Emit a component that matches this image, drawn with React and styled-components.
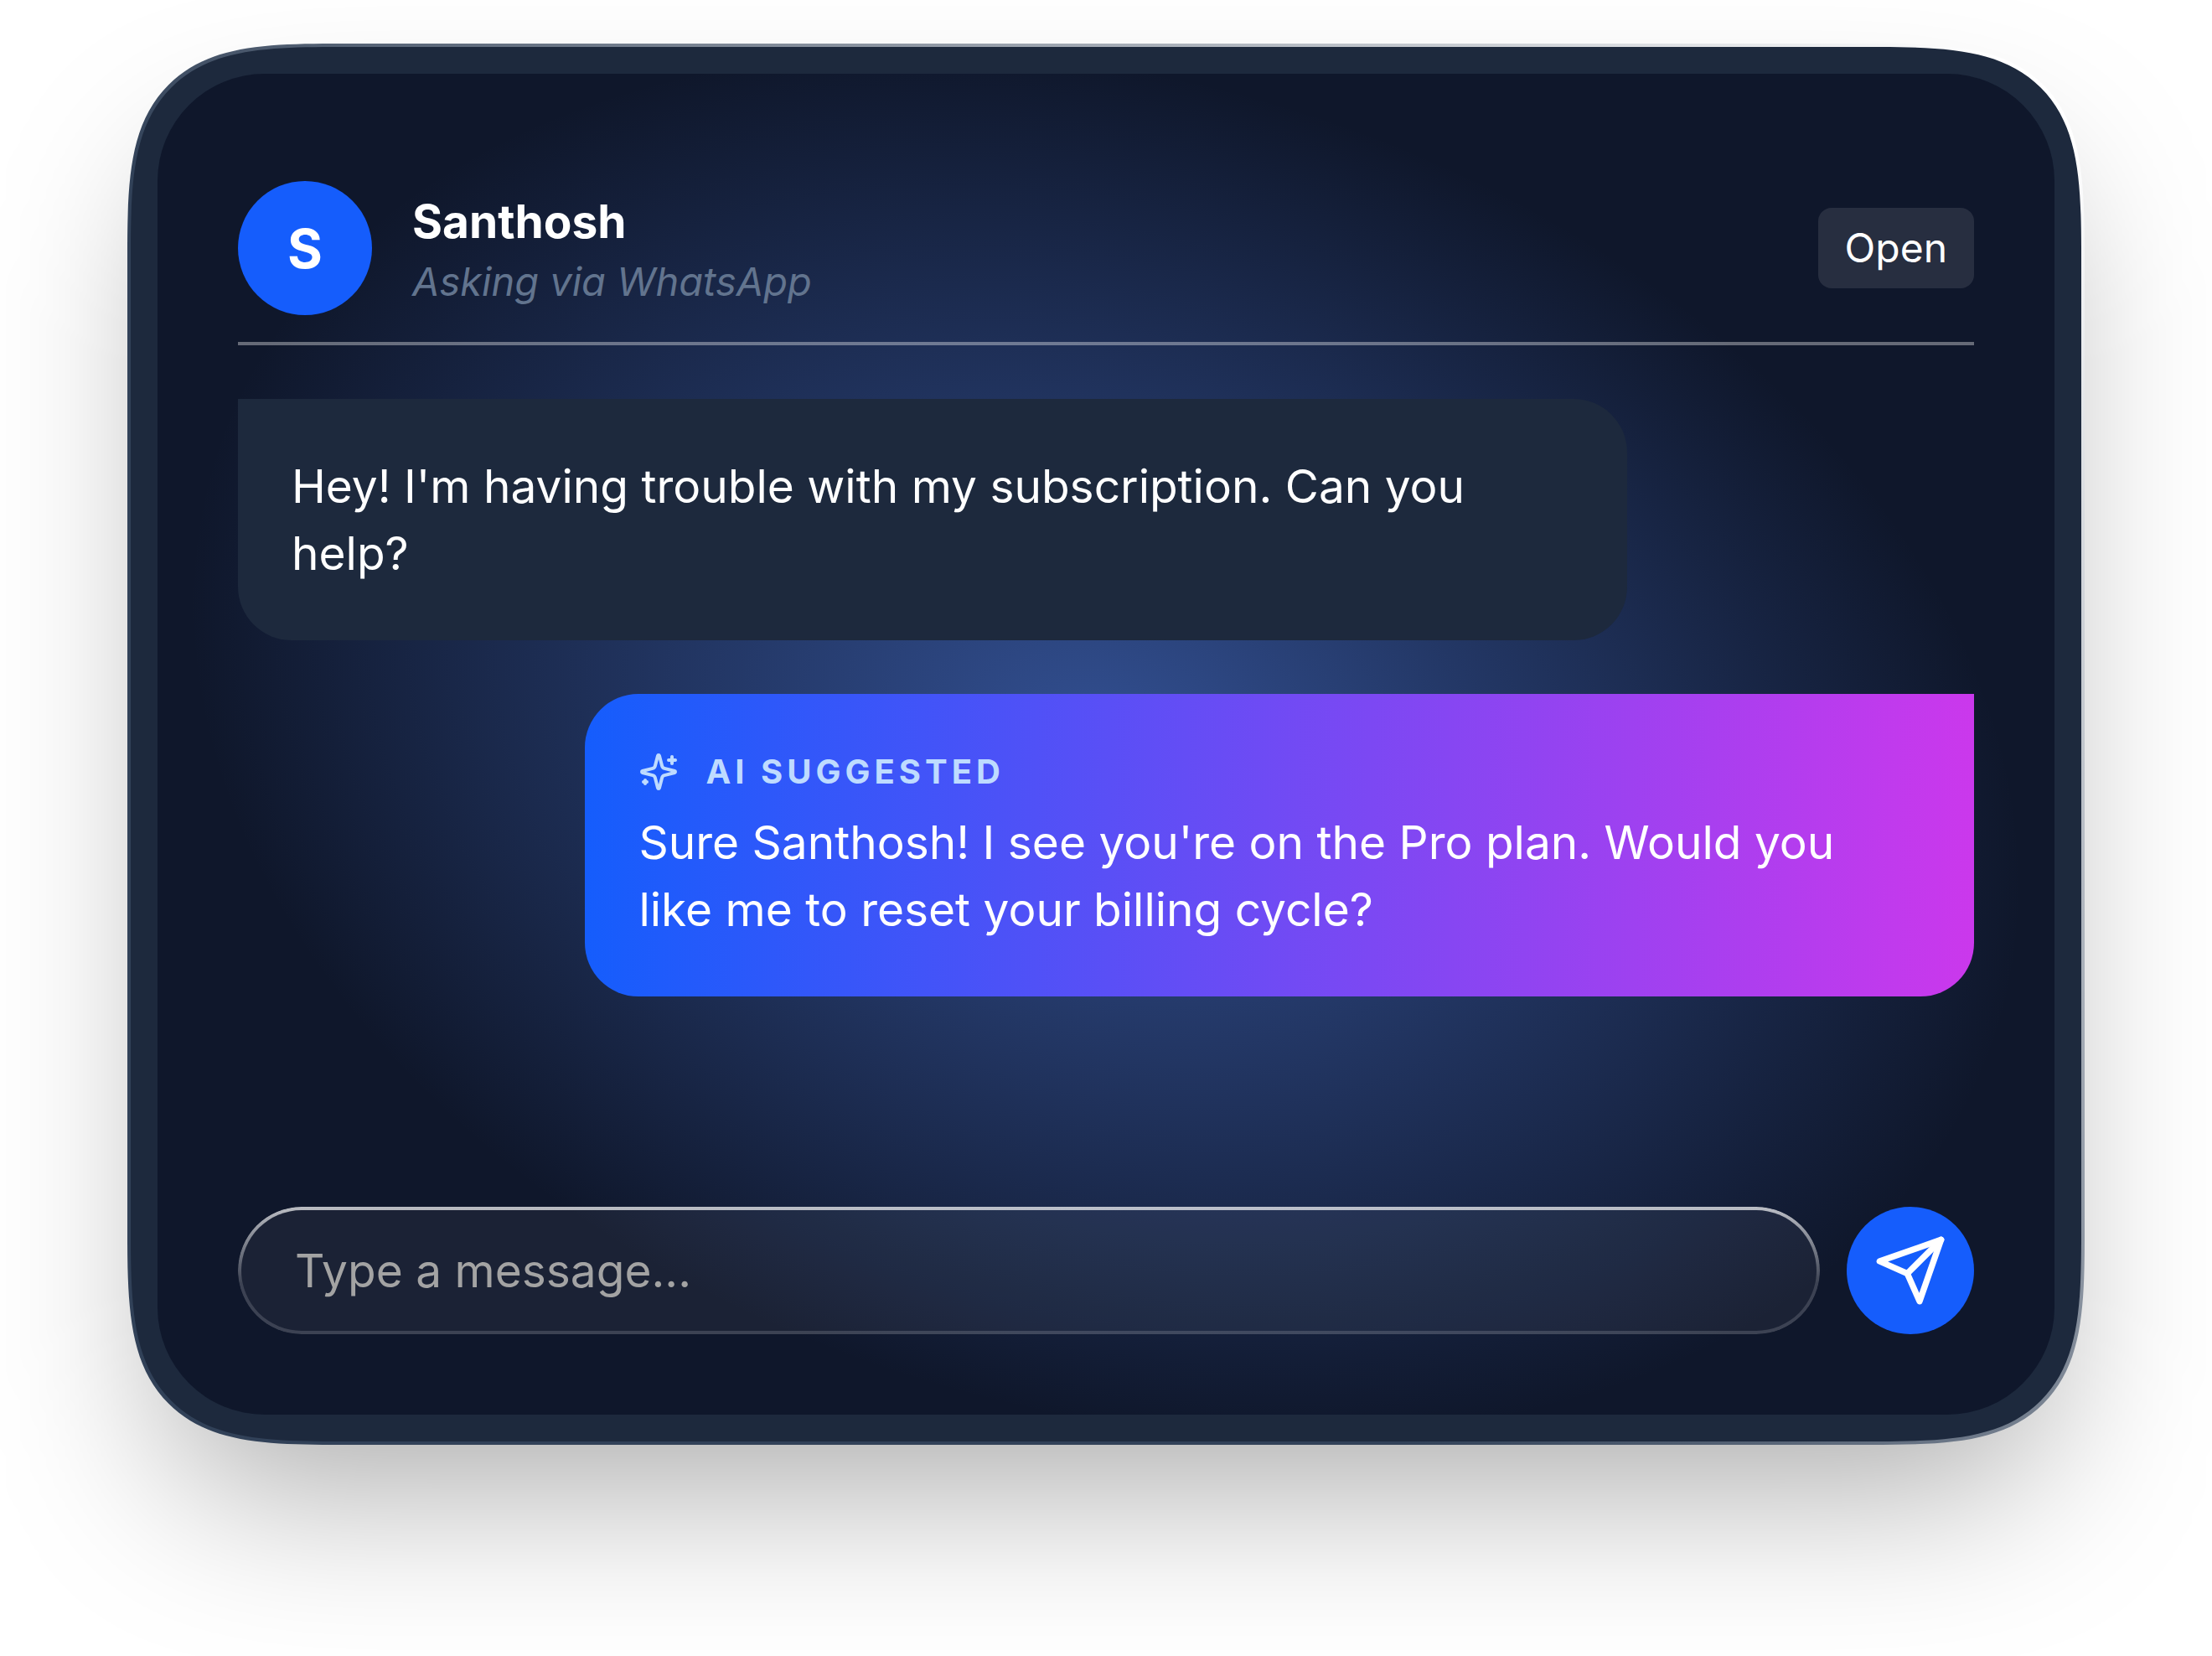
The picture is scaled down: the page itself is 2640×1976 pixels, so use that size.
import React, { useState } from 'react';
import styled, { createGlobalStyle } from 'styled-components';

const messages = [
  { id: 1, from: 'customer', text: "Hey! I'm having trouble with my subscription. Can you help?" },
  { id: 2, from: 'agent', suggested: true, text: "Sure Santhosh! I see you're on the Pro plan. Would you like me to reset your billing cycle?" },
]

function SparklesIcon() {
  return (
    <SmallIcon viewBox="0 0 24 24" aria-hidden="true">
      <path d="M9.937 15.5A2 2 0 0 0 8.5 14.063l-6.135-1.582a.5.5 0 0 1 0-.962L8.5 9.936A2 2 0 0 0 9.937 8.5l1.582-6.135a.5.5 0 0 1 .963 0L14.063 8.5A2 2 0 0 0 15.5 9.937l6.135 1.581a.5.5 0 0 1 0 .964L15.5 14.063a2 2 0 0 0-1.437 1.437l-1.582 6.135a.5.5 0 0 1-.963 0z" />
      <path d="M20 3v4" />
      <path d="M22 5h-4" />
      <path d="M4 17v2" />
      <path d="M5 18H3" />
    </SmallIcon>
  )
}

function SendIcon() {
  return (
    <LargeIcon viewBox="0 0 24 24" aria-hidden="true">
      <path d="m22 2-7 20-4-9-9-4Z" />
      <path d="M22 2 11 13" />
    </LargeIcon>
  )
}

function Message({ message }) {
  return (
    <Bubble $from={message.from}>
      {message.suggested && (
        <SuggestedLabel>
          <SparklesIcon />
          AI SUGGESTED
        </SuggestedLabel>
      )}
      <BubbleText>{message.text}</BubbleText>
    </Bubble>
  )
}

export default function App() {
  const [draft, setDraft] = useState('');

  return (
    <Page>
      <GlobalStyle />
      <Shadow>
        <Frame>
          <Panel>
            <Header>
              <Avatar>S</Avatar>
              <Contact>
                <ContactName>Santhosh</ContactName>
                <ContactSource>Asking via WhatsApp</ContactSource>
              </Contact>
              <OpenButton type="button">Open</OpenButton>
            </Header>
            <Messages>
              {messages.map((message) => <Message key={message.id} message={message} />)}
            </Messages>
            <Composer onSubmit={(e) => e.preventDefault()}>
              <Field>
                <FieldInput
                  type="text"
                  aria-label="Message"
                  placeholder="Type a message..."
                  value={draft}
                  onChange={(e) => setDraft(e.target.value)}
                />
              </Field>
              <SendButton type="submit" aria-label="Send">
                <SendIcon />
              </SendButton>
            </Composer>
          </Panel>
        </Frame>
      </Shadow>
    </Page>
  );
}

const GlobalStyle = createGlobalStyle`
  * {
    box-sizing: border-box;
  }
  body {
    margin: 0;
    background: #ffffff;
    font-family: Inter, 'Liberation Sans', sans-serif;
  }
  button, input {
    font-family: inherit;
  }
`
const Page = styled.main`
  min-height: 100vh;
  padding: 52px 152px 252px;
  overflow: hidden;
`
const Shadow = styled.div`
  position: relative;
  isolation: isolate;
  &::before {
    content: '';
    position: absolute;
    inset: 148px 48px -52px;
    z-index: -1;
    border-radius: 112px;
    background: rgba(0, 0, 0, 0.33);
    filter: blur(100px);
  }
`
const Frame = styled.section`
  padding: 32px;
  border: 4px solid transparent;
  border-radius: 160px;
  background:
    linear-gradient(#1d293d, #1d293d) padding-box,
    linear-gradient(45deg, #314158 38%, #ffffff 97%) border-box;
  @supports (corner-shape: squircle) {
    border-radius: 256px;
    corner-shape: superellipse(1.7);
  }
`
const Panel = styled.div`
  position: relative;
  z-index: 0;
  display: grid;
  grid-template-rows: auto 1fr auto;
  gap: 64px;
  min-height: calc(100vh - 376px);
  padding: 128px 96px 96px;
  border-radius: 128px;
  background: #0f172b;
  overflow: hidden;
  &::before {
    content: '';
    position: absolute;
    inset: 0;
    z-index: -1;
    background: radial-gradient(ellipse, rgba(85, 135, 247, 0.5), transparent 70%);
    transform: rotate(18deg);
  }
`
const Header = styled.header`
  display: flex;
  align-items: center;
  gap: 48px;
  padding-bottom: 32px;
  border-bottom: 4px solid rgba(255, 255, 255, 0.36);
`
const Avatar = styled.div`
  display: flex;
  align-items: center;
  justify-content: center;
  width: 160px;
  height: 160px;
  border-radius: 50%;
  background: #155dfc;
  color: #ffffff;
  font-size: 64px;
  font-weight: 700;
`
const Contact = styled.div`
  flex: 1;
`
const ContactName = styled.h2`
  margin: 0;
  color: #ffffff;
  font-size: 55px;
  font-weight: 700;
  line-height: 80px;
`
const ContactSource = styled.p`
  margin: 0;
  color: #62748e;
  font-size: 47px;
  font-style: italic;
  line-height: 64px;
`
const OpenButton = styled.button`
  padding: 16px 32px;
  border: 0;
  border-radius: 16px;
  background: rgba(255, 255, 255, 0.1);
  color: #ffffff;
  font-size: 48px;
  line-height: 64px;
  cursor: pointer;
`
const Messages = styled.div`
  display: flex;
  flex-direction: column;
  gap: 64px;
`
const Bubble = styled.article`
  width: 80%;
  padding: 64px;
  border-radius: ${props => props.$from === 'agent' ? '64px 0 64px 64px' : '0 64px 64px 64px'};
  align-self: ${props => props.$from === 'agent' ? 'flex-end' : 'flex-start'};
  background: ${props => props.$from === 'agent' ? 'linear-gradient(to right, #155dfc, #cb38ec)' : '#1d293d'};
  color: #ffffff;
`
const SuggestedLabel = styled.div`
  display: flex;
  align-items: center;
  gap: 32px;
  margin-bottom: 16px;
  color: #bedbff;
  font-size: 40px;
  font-weight: 700;
  letter-spacing: 5px;
  line-height: 57px;
`
const BubbleText = styled.p`
  margin: 0;
  font-size: 55px;
  line-height: 80px;
`
const Composer = styled.form`
  display: flex;
  gap: 32px;
`
const Field = styled.div`
  position: relative;
  flex: 1;
  height: 152px;
  border-radius: 76px;
  background: rgba(255, 255, 255, 0.05);
  /* ring that fades from top to bottom */
  &::after {
    content: '';
    position: absolute;
    inset: 0;
    padding: 4px;
    border-radius: inherit;
    background: linear-gradient(rgba(255, 255, 255, 0.7), rgba(255, 255, 255, 0.15) 60%);
    mask: linear-gradient(#000 0 0) content-box exclude, linear-gradient(#000 0 0);
    pointer-events: none;
  }
`
const FieldInput = styled.input`
  width: 100%;
  height: 100%;
  padding: 0 68px;
  border: 0;
  border-radius: inherit;
  outline: 0;
  background: transparent;
  color: #ffffff;
  font-size: 55px;
  &::placeholder {
    color: #a3a3a3;
    opacity: 1;
  }
`
const SendButton = styled.button`
  display: flex;
  align-items: center;
  justify-content: center;
  width: 152px;
  height: 152px;
  padding: 0;
  border: 0;
  border-radius: 50%;
  background: #155dfc;
  color: #ffffff;
  cursor: pointer;
`
const Icon = styled.svg`
  flex: none;
  fill: none;
  stroke: currentColor;
  stroke-width: 2;
  stroke-linecap: round;
  stroke-linejoin: round;
`
const SmallIcon = styled(Icon)`
  width: 48px;
  height: 48px;
`
const LargeIcon = styled(Icon)`
  width: 88px;
  height: 88px;
`
